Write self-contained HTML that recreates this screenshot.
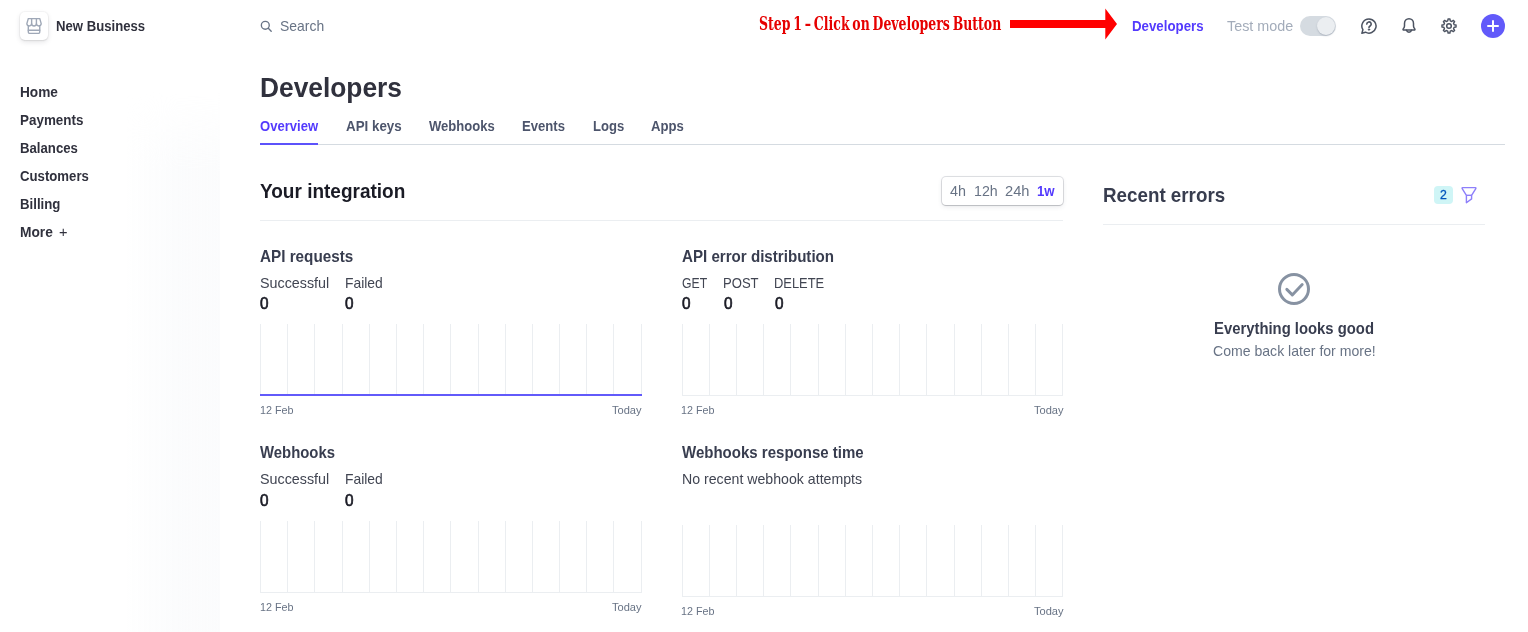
<!DOCTYPE html>
<html lang="en"><head><meta charset="utf-8"><title>Developers</title>
<style>
html,body{margin:0;padding:0;background:#fff;overflow:hidden}
body{width:1528px;height:632px;position:relative;font-family:"Liberation Sans",Arial,sans-serif}
.t{position:absolute;white-space:nowrap;line-height:normal}
i,svg,div{position:absolute;display:block}
.gl{width:1px;background:#ebeef1}
.hl{height:1px;background:#ebeef1}
.vl{height:2px;background:#625afa}
.ic{fill:none;stroke:#4c5361;stroke-width:1.5;stroke-linecap:round;stroke-linejoin:round}
</style></head><body>
<!-- sidebar faint gradient -->
<div style="left:124px;top:92px;width:96px;height:540px;background:linear-gradient(90deg,rgba(246,248,250,0),rgba(246,248,250,.45) 55%,rgba(248,249,251,.5));-webkit-mask-image:linear-gradient(180deg,transparent,#000 80px);mask-image:linear-gradient(180deg,transparent,#000 80px)"></div>

<!-- business icon -->
<div style="left:20px;top:12px;width:28px;height:28px;border-radius:5px;background:#fff;box-shadow:0 0 0 1px rgba(48,49,61,.035),0 2px 5px rgba(48,49,61,.13),0 1px 1.5px rgba(0,0,0,.06)"></div>
<svg style="left:26px;top:18px" width="16" height="16" viewBox="0 0 16 16" fill="none" stroke="#9fa8b7" stroke-width="1.4" stroke-linejoin="round" stroke-linecap="round">
<path d="M2.3 0.6H13.750L15.200 5.600a2.392 2.392 0 0 1-4.783 0a2.392 2.392 0 0 1-4.784 0a2.392 2.392 0 0 1-4.783 0z"/>
<path d="M5.630 0.600V5.600M10.420 0.600V5.600"/>
<path d="M2.300 7.800V14.100a1.250 1.250 0 0 0 1.250 1.250H12.500a1.250 1.250 0 0 0 1.250-1.250V7.800"/>
<path d="M2.300 12.300H13.750"/>
</svg>

<!-- search icon -->
<svg style="left:260px;top:20px" width="12" height="12" viewBox="0 0 12 12" fill="none" stroke="#687385" stroke-width="1.35" stroke-linecap="round"><circle cx="5.3" cy="5.3" r="3.95"/><path d="M8.3 8.3L11.2 11.2"/></svg>

<!-- red arrow -->
<svg style="left:1005px;top:4px" width="120" height="40" viewBox="1005 4 120 40"><path d="M1010 20H1105.3V8.5L1117 24L1105.3 39.5V28H1010z" fill="#ff0000"/></svg>

<!-- toggle -->
<div style="left:1300px;top:16px;width:36px;height:20px;border-radius:10px;background:#d5dbe1"></div>
<div style="left:1317px;top:17px;width:18px;height:18px;border-radius:9px;background:#ebeef1;box-shadow:0 1px 1.5px rgba(100,110,130,.35)"></div>

<!-- help icon -->
<svg class="ic" style="left:1361px;top:18px" width="16" height="16" viewBox="0 0 16 16">
<path d="M8 0.9a7.1 7.1 0 1 1-3.5 13.3L0.9 15.2l1-3.5A7.1 7.1 0 0 1 8 0.9z"/>
<path d="M5.8 6.1a2.2 2.2 0 1 1 3.3 1.9c-.7.45-1.1.8-1.1 1.6" stroke-width="1.6"/>
<circle cx="8" cy="11.6" r="0.7" fill="#4c5361" stroke-width="1"/>
</svg>
<!-- bell -->
<svg class="ic" style="left:1401px;top:18px" width="16" height="16" viewBox="0 0 16 16">
<path d="M8 0.8c-2.700 0-4.500 2-4.500 4.600v2.500c0 .9-.5 2-1.300 3-.4.500-.1 1.200.6 1.200h10.400c.7 0 1-.7.600-1.200-.8-1-1.300-2.100-1.300-3V5.400c0-2.600-1.800-4.600-4.500-4.600z"/>
<path d="M5.500 12.300a2.600 2.600 0 0 0 5 0"/>
</svg>
<!-- gear -->
<svg class="ic" style="left:1441px;top:18px" width="16" height="16" viewBox="0 0 16 16">
<circle cx="8" cy="8" r="2.3"/>
<path d="M6.76 2.85 L7.05 0.96 L8.95 0.96 L9.24 2.85 L10.77 3.48 L12.31 2.36 L13.64 3.69 L12.52 5.23 L13.15 6.76 L15.04 7.05 L15.04 8.95 L13.15 9.24 L12.52 10.77 L13.64 12.31 L12.31 13.64 L10.77 12.52 L9.24 13.15 L8.95 15.04 L7.05 15.04 L6.76 13.15 L5.23 12.52 L3.69 13.64 L2.36 12.31 L3.48 10.77 L2.85 9.24 L0.96 8.95 L0.96 7.05 L2.85 6.76 L3.48 5.23 L2.36 3.69 L3.69 2.36 L5.23 3.48z" stroke-width="1.4"/>
</svg>
<!-- plus button -->
<div style="left:1481px;top:14px;width:24px;height:24px;border-radius:12px;background:#625afa"></div>
<i style="left:1487px;top:25px;width:12px;height:2px;background:#fff;border-radius:1px"></i>
<i style="left:1492px;top:20px;width:2px;height:12px;background:#fff;border-radius:1px"></i>

<!-- tab line -->
<i style="left:260px;top:144px;width:1245px;height:1px;background:#d5dbe1"></i>
<i style="left:260px;top:143px;width:58px;height:2px;background:#5c52fb"></i>

<!-- dividers -->
<i style="left:260px;top:220px;width:803px;height:1px;background:#ebeef1"></i>
<i style="left:1103px;top:224px;width:382px;height:1px;background:#ebeef1"></i>

<!-- range selector -->
<div style="left:942px;top:177px;width:121px;height:28px;border-radius:4px;background:#fff;box-shadow:0 0 0 1px rgba(60,66,87,.16),0 2px 5px rgba(60,66,87,.1),0 1px 1px rgba(0,0,0,.12)"></div>

<!-- badge + filter -->
<div style="left:1434px;top:186px;width:19px;height:18px;border-radius:4px;background:#cff5f6"></div>
<svg style="left:1461px;top:186px" width="16" height="18" viewBox="0 0 16 18" fill="none" stroke="#8d7ffa" stroke-width="1.4" stroke-linejoin="round"><path d="M1.7 1.6h12.6a.6.6 0 0 1 .5 1L10.6 9.3v3.600L5.400 16.700V9.300L1.200 2.600a.6.600 0 0 1 .5-1z"/><path d="M5.4 9.3h5.2"/></svg>

<!-- check circle -->
<svg style="left:1276px;top:271px" width="36" height="36" viewBox="0 0 36 36" fill="none" stroke="#8792a2" stroke-linecap="round" stroke-linejoin="round"><circle cx="18" cy="18" r="14.5" stroke-width="3"/><path d="M10.800 18.400l5.500 5.500l9.900-10.400" stroke-width="2.900"/></svg>

<!-- charts -->
<i class="gl" style="left:260px;top:324px;height:72px"></i>
<i class="gl" style="left:287px;top:324px;height:72px"></i>
<i class="gl" style="left:314px;top:324px;height:72px"></i>
<i class="gl" style="left:342px;top:324px;height:72px"></i>
<i class="gl" style="left:369px;top:324px;height:72px"></i>
<i class="gl" style="left:396px;top:324px;height:72px"></i>
<i class="gl" style="left:423px;top:324px;height:72px"></i>
<i class="gl" style="left:450px;top:324px;height:72px"></i>
<i class="gl" style="left:478px;top:324px;height:72px"></i>
<i class="gl" style="left:505px;top:324px;height:72px"></i>
<i class="gl" style="left:532px;top:324px;height:72px"></i>
<i class="gl" style="left:559px;top:324px;height:72px"></i>
<i class="gl" style="left:586px;top:324px;height:72px"></i>
<i class="gl" style="left:613px;top:324px;height:72px"></i>
<i class="gl" style="left:641px;top:324px;height:72px"></i>
<i class="vl" style="left:260px;top:394px;width:382px"></i>
<i class="gl" style="left:682px;top:324px;height:72px"></i>
<i class="gl" style="left:709px;top:324px;height:72px"></i>
<i class="gl" style="left:736px;top:324px;height:72px"></i>
<i class="gl" style="left:763px;top:324px;height:72px"></i>
<i class="gl" style="left:790px;top:324px;height:72px"></i>
<i class="gl" style="left:818px;top:324px;height:72px"></i>
<i class="gl" style="left:845px;top:324px;height:72px"></i>
<i class="gl" style="left:872px;top:324px;height:72px"></i>
<i class="gl" style="left:899px;top:324px;height:72px"></i>
<i class="gl" style="left:926px;top:324px;height:72px"></i>
<i class="gl" style="left:954px;top:324px;height:72px"></i>
<i class="gl" style="left:981px;top:324px;height:72px"></i>
<i class="gl" style="left:1008px;top:324px;height:72px"></i>
<i class="gl" style="left:1035px;top:324px;height:72px"></i>
<i class="gl" style="left:1062px;top:324px;height:72px"></i>
<i class="hl" style="left:682px;top:395px;width:381px"></i>
<i class="gl" style="left:260px;top:521px;height:72px"></i>
<i class="gl" style="left:287px;top:521px;height:72px"></i>
<i class="gl" style="left:314px;top:521px;height:72px"></i>
<i class="gl" style="left:342px;top:521px;height:72px"></i>
<i class="gl" style="left:369px;top:521px;height:72px"></i>
<i class="gl" style="left:396px;top:521px;height:72px"></i>
<i class="gl" style="left:423px;top:521px;height:72px"></i>
<i class="gl" style="left:450px;top:521px;height:72px"></i>
<i class="gl" style="left:478px;top:521px;height:72px"></i>
<i class="gl" style="left:505px;top:521px;height:72px"></i>
<i class="gl" style="left:532px;top:521px;height:72px"></i>
<i class="gl" style="left:559px;top:521px;height:72px"></i>
<i class="gl" style="left:586px;top:521px;height:72px"></i>
<i class="gl" style="left:613px;top:521px;height:72px"></i>
<i class="gl" style="left:641px;top:521px;height:72px"></i>
<i class="hl" style="left:260px;top:592px;width:382px"></i>
<i class="gl" style="left:682px;top:525px;height:72px"></i>
<i class="gl" style="left:709px;top:525px;height:72px"></i>
<i class="gl" style="left:736px;top:525px;height:72px"></i>
<i class="gl" style="left:763px;top:525px;height:72px"></i>
<i class="gl" style="left:790px;top:525px;height:72px"></i>
<i class="gl" style="left:818px;top:525px;height:72px"></i>
<i class="gl" style="left:845px;top:525px;height:72px"></i>
<i class="gl" style="left:872px;top:525px;height:72px"></i>
<i class="gl" style="left:899px;top:525px;height:72px"></i>
<i class="gl" style="left:926px;top:525px;height:72px"></i>
<i class="gl" style="left:954px;top:525px;height:72px"></i>
<i class="gl" style="left:981px;top:525px;height:72px"></i>
<i class="gl" style="left:1008px;top:525px;height:72px"></i>
<i class="gl" style="left:1035px;top:525px;height:72px"></i>
<i class="gl" style="left:1062px;top:525px;height:72px"></i>
<i class="hl" style="left:682px;top:596px;width:381px"></i>

<span class="t" id="biz" style="left:56.17px;top:17.00px;font:700 15.4px 'Liberation Sans', Arial, sans-serif;color:#30313d;transform:scaleX(0.8537);transform-origin:0 0;">New Business</span>
<span class="t" id="nav_Home" style="left:19.72px;top:83.00px;font:700 15.4px 'Liberation Sans', Arial, sans-serif;color:#30313d;transform:scaleX(0.8879);transform-origin:0 0;">Home</span>
<span class="t" id="nav_Payments" style="left:19.80px;top:111.00px;font:700 15.4px 'Liberation Sans', Arial, sans-serif;color:#30313d;transform:scaleX(0.8722);transform-origin:0 0;">Payments</span>
<span class="t" id="nav_Balances" style="left:19.89px;top:139.00px;font:700 15.4px 'Liberation Sans', Arial, sans-serif;color:#30313d;transform:scaleX(0.8565);transform-origin:0 0;">Balances</span>
<span class="t" id="nav_Customers" style="left:19.91px;top:167.00px;font:700 15.4px 'Liberation Sans', Arial, sans-serif;color:#30313d;transform:scaleX(0.8564);transform-origin:0 0;">Customers</span>
<span class="t" id="nav_Billing" style="left:19.93px;top:195.00px;font:700 15.4px 'Liberation Sans', Arial, sans-serif;color:#30313d;transform:scaleX(0.8588);transform-origin:0 0;">Billing</span>
<span class="t" id="nav_More" style="left:20.34px;top:223.00px;font:700 15.4px 'Liberation Sans', Arial, sans-serif;color:#30313d;transform:scaleX(0.8938);transform-origin:0 0;">More</span>
<span class="t" id="plus" style="left:58.72px;top:224.00px;font:400 14.8px 'Liberation Sans', Arial, sans-serif;color:#30313d;transform:scaleX(0.9849);transform-origin:0 0;">+</span>
<span class="t" id="search" style="left:279.57px;top:18.00px;font:400 14.8px 'Liberation Sans', Arial, sans-serif;color:#687385;transform:scaleX(0.9417);transform-origin:0 0;">Search</span>
<span class="t" id="step" style="left:759.04px;top:13.40px;font:700 18.3px 'DejaVu Serif Condensed', 'DejaVu Serif', 'Liberation Serif', serif;color:#e60000;transform:scaleX(0.7590);transform-origin:0 0;word-spacing:-2px;">Step 1 – Click on Developers Button</span>
<span class="t" id="devlink" style="left:1131.63px;top:17.00px;font:700 15.4px 'Liberation Sans', Arial, sans-serif;color:#533afd;transform:scaleX(0.8625);transform-origin:0 0;">Developers</span>
<span class="t" id="testmode" style="left:1226.74px;top:18.00px;font:400 14.8px 'Liberation Sans', Arial, sans-serif;color:#a3acba;transform:scaleX(0.9696);transform-origin:0 0;">Test mode</span>
<span class="t" id="title" style="left:259.90px;top:72.00px;font:700 28px 'Liberation Sans', Arial, sans-serif;color:#30313d;transform:scaleX(0.9403);transform-origin:0 0;">Developers</span>
<span class="t" id="tab_Overview" style="left:260.38px;top:118.00px;font:700 14.8px 'Liberation Sans', Arial, sans-serif;color:#533afd;transform:scaleX(0.8820);transform-origin:0 0;">Overview</span>
<span class="t" id="tab_API_keys" style="left:345.79px;top:118.00px;font:700 14.8px 'Liberation Sans', Arial, sans-serif;color:#4d556c;transform:scaleX(0.9024);transform-origin:0 0;">API keys</span>
<span class="t" id="tab_Webhooks" style="left:428.84px;top:118.00px;font:700 14.8px 'Liberation Sans', Arial, sans-serif;color:#4d556c;transform:scaleX(0.8820);transform-origin:0 0;">Webhooks</span>
<span class="t" id="tab_Events" style="left:521.90px;top:118.00px;font:700 14.8px 'Liberation Sans', Arial, sans-serif;color:#4d556c;transform:scaleX(0.8854);transform-origin:0 0;">Events</span>
<span class="t" id="tab_Logs" style="left:593.00px;top:118.00px;font:700 14.8px 'Liberation Sans', Arial, sans-serif;color:#4d556c;transform:scaleX(0.8829);transform-origin:0 0;">Logs</span>
<span class="t" id="tab_Apps" style="left:650.59px;top:118.00px;font:700 14.8px 'Liberation Sans', Arial, sans-serif;color:#4d556c;transform:scaleX(0.8879);transform-origin:0 0;">Apps</span>
<span class="t" id="yourint" style="left:259.70px;top:179.00px;font:700 20.5px 'Liberation Sans', Arial, sans-serif;color:#1a1b25;transform:scaleX(0.9267);transform-origin:0 0;">Your integration</span>
<span class="t" id="r4h" style="left:949.57px;top:183.00px;font:400 14.8px 'Liberation Sans', Arial, sans-serif;color:#687385;transform:scaleX(0.9698);transform-origin:0 0;">4h</span>
<span class="t" id="r12h" style="left:973.89px;top:183.00px;font:400 14.8px 'Liberation Sans', Arial, sans-serif;color:#687385;transform:scaleX(0.9597);transform-origin:0 0;">12h</span>
<span class="t" id="r24h" style="left:1004.66px;top:183.00px;font:400 14.8px 'Liberation Sans', Arial, sans-serif;color:#687385;transform:scaleX(0.9913);transform-origin:0 0;">24h</span>
<span class="t" id="r1w" style="left:1037.02px;top:183.00px;font:700 14.8px 'Liberation Sans', Arial, sans-serif;color:#533afd;transform:scaleX(0.8945);transform-origin:0 0;">1w</span>
<span class="t" id="recent" style="left:1103.35px;top:183.00px;font:700 20.5px 'Liberation Sans', Arial, sans-serif;color:#383d4f;transform:scaleX(0.9163);transform-origin:0 0;">Recent errors</span>
<span class="t" id="badge2" style="left:1440.47px;top:188.00px;font:400 12.3px 'Liberation Sans', Arial, sans-serif;color:#0055bc;transform:scaleX(0.9980);transform-origin:0 0;-webkit-text-stroke:0.3px #0055bc;">2</span>
<span class="t" id="evgood" style="left:1213.98px;top:318.50px;font:700 16.4px 'Liberation Sans', Arial, sans-serif;color:#383d4f;transform:scaleX(0.9054);transform-origin:0 0;">Everything looks good</span>
<span class="t" id="comeback" style="left:1212.94px;top:342.60px;font:400 14.8px 'Liberation Sans', Arial, sans-serif;color:#687385;transform:scaleX(0.9512);transform-origin:0 0;">Come back later for more!</span>
<span class="t" id="c1t" style="left:260.09px;top:247.00px;font:700 16.4px 'Liberation Sans', Arial, sans-serif;color:#383d4f;transform:scaleX(0.9306);transform-origin:0 0;">API requests</span>
<span class="t" id="c1a" style="left:259.93px;top:275.00px;font:400 14.8px 'Liberation Sans', Arial, sans-serif;color:#414552;transform:scaleX(0.9677);transform-origin:0 0;">Successful</span>
<span class="t" id="c1b" style="left:344.86px;top:275.00px;font:400 14.8px 'Liberation Sans', Arial, sans-serif;color:#414552;transform:scaleX(0.9368);transform-origin:0 0;">Failed</span>
<span class="t" id="c1av" style="left:260.10px;top:294.00px;font:400 16.4px 'Liberation Sans', Arial, sans-serif;color:#1a1b25;transform:scaleX(0.9352);transform-origin:0 0;-webkit-text-stroke:0.65px #1a1b25;">0</span>
<span class="t" id="c1bv" style="left:345.00px;top:294.00px;font:400 16.4px 'Liberation Sans', Arial, sans-serif;color:#1a1b25;transform:scaleX(0.9352);transform-origin:0 0;-webkit-text-stroke:0.65px #1a1b25;">0</span>
<span class="t" id="c1l" style="left:260.16px;top:404.00px;font:400 11.3px 'Liberation Sans', Arial, sans-serif;color:#687385;transform:scaleX(0.9534);transform-origin:0 0;">12 Feb</span>
<span class="t" id="c1r" style="left:612.01px;top:404.00px;font:400 11.3px 'Liberation Sans', Arial, sans-serif;color:#687385;transform:scaleX(0.9804);transform-origin:0 0;">Today</span>
<span class="t" id="c2t" style="left:681.61px;top:247.00px;font:700 16.4px 'Liberation Sans', Arial, sans-serif;color:#383d4f;transform:scaleX(0.9227);transform-origin:0 0;">API error distribution</span>
<span class="t" id="c2a" style="left:681.76px;top:274.00px;font:400 15.2px 'Liberation Sans', Arial, sans-serif;color:#414552;transform:scaleX(0.8059);transform-origin:0 0;">GET</span>
<span class="t" id="c2b" style="left:722.93px;top:274.00px;font:400 15.2px 'Liberation Sans', Arial, sans-serif;color:#414552;transform:scaleX(0.8612);transform-origin:0 0;">POST</span>
<span class="t" id="c2c" style="left:773.54px;top:274.00px;font:400 15.2px 'Liberation Sans', Arial, sans-serif;color:#414552;transform:scaleX(0.8496);transform-origin:0 0;">DELETE</span>
<span class="t" id="c2av" style="left:682.10px;top:294.00px;font:400 16.4px 'Liberation Sans', Arial, sans-serif;color:#1a1b25;transform:scaleX(0.9352);transform-origin:0 0;-webkit-text-stroke:0.65px #1a1b25;">0</span>
<span class="t" id="c2bv" style="left:724.00px;top:294.00px;font:400 16.4px 'Liberation Sans', Arial, sans-serif;color:#1a1b25;transform:scaleX(0.9352);transform-origin:0 0;-webkit-text-stroke:0.65px #1a1b25;">0</span>
<span class="t" id="c2cv" style="left:774.70px;top:294.00px;font:400 16.4px 'Liberation Sans', Arial, sans-serif;color:#1a1b25;transform:scaleX(0.9352);transform-origin:0 0;-webkit-text-stroke:0.65px #1a1b25;">0</span>
<span class="t" id="c2l" style="left:681.08px;top:404.00px;font:400 11.3px 'Liberation Sans', Arial, sans-serif;color:#687385;transform:scaleX(0.9505);transform-origin:0 0;">12 Feb</span>
<span class="t" id="c2r" style="left:1033.51px;top:404.00px;font:400 11.3px 'Liberation Sans', Arial, sans-serif;color:#687385;transform:scaleX(0.9804);transform-origin:0 0;">Today</span>
<span class="t" id="c3t" style="left:260.04px;top:443.00px;font:700 16.4px 'Liberation Sans', Arial, sans-serif;color:#383d4f;transform:scaleX(0.9084);transform-origin:0 0;">Webhooks</span>
<span class="t" id="c3a" style="left:259.93px;top:471.00px;font:400 14.8px 'Liberation Sans', Arial, sans-serif;color:#414552;transform:scaleX(0.9677);transform-origin:0 0;">Successful</span>
<span class="t" id="c3b" style="left:344.86px;top:471.00px;font:400 14.8px 'Liberation Sans', Arial, sans-serif;color:#414552;transform:scaleX(0.9368);transform-origin:0 0;">Failed</span>
<span class="t" id="c3av" style="left:260.10px;top:491.00px;font:400 16.4px 'Liberation Sans', Arial, sans-serif;color:#1a1b25;transform:scaleX(0.9352);transform-origin:0 0;-webkit-text-stroke:0.65px #1a1b25;">0</span>
<span class="t" id="c3bv" style="left:345.00px;top:491.00px;font:400 16.4px 'Liberation Sans', Arial, sans-serif;color:#1a1b25;transform:scaleX(0.9352);transform-origin:0 0;-webkit-text-stroke:0.65px #1a1b25;">0</span>
<span class="t" id="c3l" style="left:260.16px;top:600.50px;font:400 11.3px 'Liberation Sans', Arial, sans-serif;color:#687385;transform:scaleX(0.9534);transform-origin:0 0;">12 Feb</span>
<span class="t" id="c3r" style="left:612.01px;top:600.50px;font:400 11.3px 'Liberation Sans', Arial, sans-serif;color:#687385;transform:scaleX(0.9804);transform-origin:0 0;">Today</span>
<span class="t" id="c4t" style="left:681.55px;top:443.00px;font:700 16.4px 'Liberation Sans', Arial, sans-serif;color:#383d4f;transform:scaleX(0.9163);transform-origin:0 0;">Webhooks response time</span>
<span class="t" id="c4a" style="left:681.73px;top:471.00px;font:400 14.8px 'Liberation Sans', Arial, sans-serif;color:#414552;transform:scaleX(0.9562);transform-origin:0 0;">No recent webhook attempts</span>
<span class="t" id="c4l" style="left:681.08px;top:604.80px;font:400 11.3px 'Liberation Sans', Arial, sans-serif;color:#687385;transform:scaleX(0.9505);transform-origin:0 0;">12 Feb</span>
<span class="t" id="c4r" style="left:1033.51px;top:604.80px;font:400 11.3px 'Liberation Sans', Arial, sans-serif;color:#687385;transform:scaleX(0.9804);transform-origin:0 0;">Today</span>
</body></html>
